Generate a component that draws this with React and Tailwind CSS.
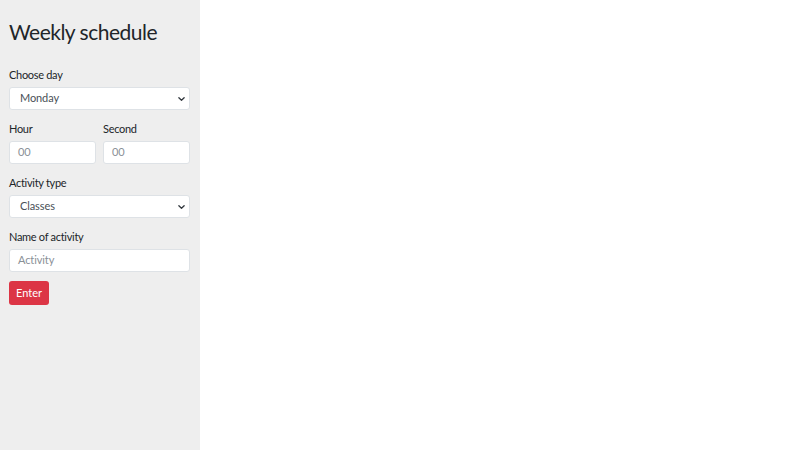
import React from "react";

const Chevron = () => (
  <svg className="pointer-events-none absolute right-[4px] top-1/2 -translate-y-1/2" width="7" height="7" viewBox="0 0 16 16">
    <path d="M2 5l6 6 6-6" fill="none" stroke="#343a40" strokeWidth="3" strokeLinecap="round" strokeLinejoin="round" />
  </svg>
);

function Select({ value }) {
  return (
    <div className="relative h-[23px] w-full rounded-[3px] border border-[#dee2e6] bg-white">
      <div className="flex h-full items-center pl-[10px] text-[11px] tracking-[-0.1px] text-[#495057]">{value}</div>
      <Chevron />
    </div>
  );
}

function Input({ placeholder }) {
  return (
    <div className="flex h-[23px] w-full items-center rounded-[3px] border border-[#dee2e6] bg-white pl-[8px] text-[11px] tracking-[-0.1px] text-[#8a9097]">
      {placeholder}
    </div>
  );
}

function Label({ children }) {
  return <div className="mb-[4px] h-[17px] text-[11px] leading-[17px] tracking-[-0.3px] text-[#212529]">{children}</div>;
}

export default function App() {
  return (
    <div className="flex h-[450px] w-[800px] bg-white" style={{ fontFamily: 'Lato, "Open Sans", sans-serif' }}>
      <div className="flex w-[200px] flex-col bg-[#eeeeee] pl-[9px] pr-[10px]">
        <h1 className="mt-[16px] h-[32px] text-[21px] leading-[32px] tracking-[-0.5px] text-[#212529]">Weekly schedule</h1>
        <div className="mt-[18px]">
          <Label>Choose day</Label>
          <Select value="Monday" />
        </div>
        <div className="mt-[10px] grid grid-cols-2 gap-x-[7px]">
          <div>
            <Label>Hour</Label>
            <Input placeholder="00" />
          </div>
          <div>
            <Label>Second</Label>
            <Input placeholder="00" />
          </div>
        </div>
        <div className="mt-[10px]">
          <Label>Activity type</Label>
          <Select value="Classes" />
        </div>
        <div className="mt-[10px]">
          <Label>Name of activity</Label>
          <Input placeholder="Activity" />
        </div>
        <div className="mt-[9px]">
          <button className="flex h-[24px] w-[40px] items-center justify-center rounded-[3px] bg-[#dc3545] text-[11px] text-white">Enter</button>
        </div>
      </div>
      <div className="flex-1" />
    </div>
  );
}
